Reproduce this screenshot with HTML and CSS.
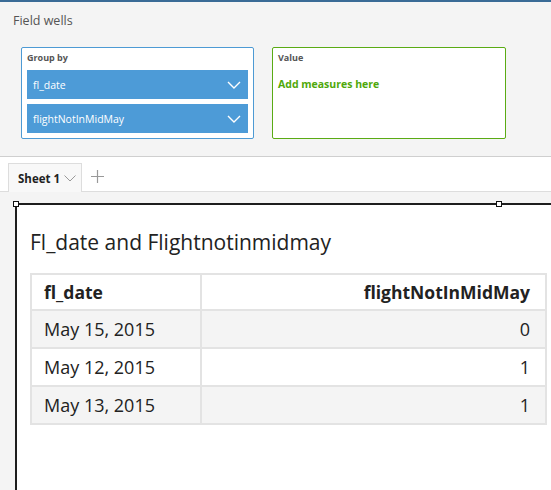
FILE: index.html
```html
<!DOCTYPE html>
<html>
<head>
<meta charset="utf-8">
<link rel="stylesheet" href="styles.css">
</head>
<body>
<div class="topbar"></div>
<section class="wells">
  <div class="wells-title">Field wells</div>
  <div class="wells-row">
    <div class="well group">
      <div class="well-label">Group by</div>
      <div class="pill"><span>fl_date</span>
        <svg class="chev" width="14" height="8" viewBox="0 0 14 8"><path d="M1 1 L7 7 L13 1" fill="none" stroke="#fff" stroke-width="1.4"/></svg>
      </div>
      <div class="pill"><span>flightNotInMidMay</span>
        <svg class="chev" width="14" height="8" viewBox="0 0 14 8"><path d="M1 1 L7 7 L13 1" fill="none" stroke="#fff" stroke-width="1.4"/></svg>
      </div>
    </div>
    <div class="well value">
      <div class="well-label">Value</div>
      <div class="add">Add measures here</div>
    </div>
  </div>
</section>
<nav class="tabbar">
  <div class="tab"><span>Sheet 1</span>
    <svg class="tab-chev" width="12" height="7" viewBox="0 0 12 7"><path d="M0.5 0.5 L6 6 L11.5 0.5" fill="none" stroke="#999" stroke-width="1"/></svg>
  </div>
  <svg class="plus" width="13" height="13" viewBox="0 0 13 13"><path d="M6.5 0 V13 M0 6.5 H13" stroke="#999" stroke-width="1.2"/></svg>
</nav>
<main class="canvas">
  <div class="visual">
    <span class="handle h-left"></span>
    <span class="handle h-right"></span>
    <h1 class="vtitle">Fl_date and Flightnotinmidmay</h1>
    <table class="grid">
      <thead>
        <tr><th class="c1">fl_date</th><th class="c2">flightNotInMidMay</th></tr>
      </thead>
      <tbody>
        <tr class="alt"><td class="c1">May 15, 2015</td><td class="c2">0</td></tr>
        <tr><td class="c1">May 12, 2015</td><td class="c2">1</td></tr>
        <tr class="alt"><td class="c1">May 13, 2015</td><td class="c2">1</td></tr>
      </tbody>
    </table>
  </div>
</main>
</body>
</html>
```
FILE: styles.css
```css
* { box-sizing: border-box; }
html, body { margin: 0; padding: 0; }
body {
  width: 551px;
  height: 490px;
  overflow: hidden;
  background: #f4f4f4;
  font-family: "Open Sans", "Noto Sans", sans-serif;
  color: #222;
}
.topbar { height: 2px; background: #3a6b96; }
.wells {
  height: 155px;
  border-bottom: 1px solid #cfcfcf;
  padding: 11px 0 0 13px;
}
.wells-title { font-size: 12.5px; color: #555; line-height: 16px; }
.wells-row { display: flex; gap: 18px; margin: 18px 0 0 8px; }
.well {
  background: #fff;
  height: 92px;
  border-radius: 2px;
  padding: 4px 5px 0 5px;
}
.group { width: 233px; border: 1px solid #4d9ad4; }
.value { width: 234px; border: 1px solid #5aab14; }
.well-label { font-size: 9px; font-weight: 700; color: #555; line-height: 12px; }
.pill {
  display: flex;
  align-items: center;
  justify-content: space-between;
  height: 29px;
  background: #4d9bd7;
  color: #fff;
  font-size: 10.5px;
  padding: 0 7px 0 6px;
  margin-top: 5px;
}
.pill + .pill { margin-top: 5px; }
.group .well-label + .pill { margin-top: 6px; }
.add { margin-top: 13px; color: #4fa80a; font-size: 10.5px; font-weight: 700; }
.tabbar {
  height: 35px;
  background: #fff;
  border-bottom: 1px solid #ddd;
  display: flex;
  align-items: flex-end;
  padding-left: 8px;
  gap: 9px;
}
.tab {
  height: 29px;
  width: 74px;
  background: #f8f8f8;
  border: 1px solid #ddd;
  border-bottom: none;
  margin-bottom: -1px;
  display: flex;
  align-items: center;
  padding-left: 9px;
  gap: 4px;
  font-size: 11.5px;
  font-weight: 700;
  color: #222;
}
.tab-chev { margin-top: 1px; }
.plus { align-self: center; margin-bottom: -4px; }
.canvas { padding: 11px 0 0 15px; height: 300px; }
.visual {
  position: relative;
  background: #fff;
  border-top: 2px solid #1e1e1e;
  border-left: 2px solid #1e1e1e;
  height: 300px;
  width: 560px;
  padding: 22px 0 0 13px;
}
.handle {
  position: absolute;
  width: 6px;
  height: 6px;
  background: #fff;
  border: 1.5px solid #111;
  top: -4px;
}
.h-left { left: -4px; }
.h-right { left: 479px; }
.vtitle {
  margin: 0;
  font-size: 21px;
  font-weight: 400;
  line-height: 30px;
  color: #222;
}
.grid {
  margin-top: 16px;
  border-collapse: collapse;
  width: 517px;
  font-size: 18px;
  color: #222;
}
.grid th, .grid td {
  border: 2px solid #e3e3e3;
  padding: 0 15px 0 12px;
}
.grid th { height: 36px; font-weight: 700; background: #fff; font-size: 17.5px; }
.grid td { height: 38px; }
.grid .c1 { width: 170px; text-align: left; }
.grid .c2 { text-align: right; }
.grid tr.alt td { background: #f4f4f4; }
```
